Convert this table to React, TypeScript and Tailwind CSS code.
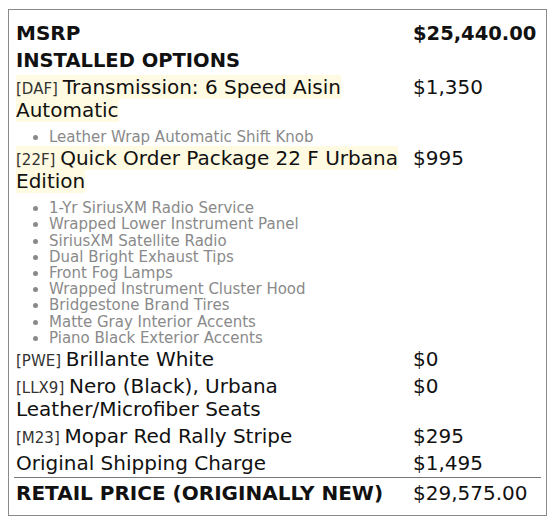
import React from 'react';

interface OptionRow {
  code?: string;
  name: string;
  price: string;
  highlight?: boolean;
  features?: string[];
}

const options: OptionRow[] = [
  {
    code: 'DAF',
    name: 'Transmission: 6 Speed Aisin Automatic',
    price: '$1,350',
    highlight: true,
    features: ['Leather Wrap Automatic Shift Knob'],
  },
  {
    code: '22F',
    name: 'Quick Order Package 22 F Urbana Edition',
    price: '$995',
    highlight: true,
    features: [
      '1-Yr SiriusXM Radio Service',
      'Wrapped Lower Instrument Panel',
      'SiriusXM Satellite Radio',
      'Dual Bright Exhaust Tips',
      'Front Fog Lamps',
      'Wrapped Instrument Cluster Hood',
      'Bridgestone Brand Tires',
      'Matte Gray Interior Accents',
      'Piano Black Exterior Accents',
    ],
  },
  { code: 'PWE', name: 'Brillante White', price: '$0' },
  { code: 'LLX9', name: 'Nero (Black), Urbana Leather/Microfiber Seats', price: '$0' },
  { code: 'M23', name: 'Mopar Red Rally Stripe', price: '$295' },
  { name: 'Original Shipping Charge', price: '$1,495' },
];

function Row({ left, right, className = 'py-[2px]' }: { left: React.ReactNode; right: React.ReactNode; className?: string }) {
  return (
    <div className={`grid grid-cols-[1fr_126px] gap-x-2 ${className}`}>
      <div>{left}</div>
      <div>{right}</div>
    </div>
  );
}

export default function App() {
  return (
    <div className="bg-white min-h-[528px] pl-[8px] pr-[8px] pt-[9px] font-['DejaVu_Sans',sans-serif] text-[#111] text-[20px] leading-[23px]">
      <div className="border border-[#8a8a8a] px-[7px] pt-[10px] pb-[10px]">
        <Row left={<span className="font-bold">MSRP</span>} right={<span className="font-bold text-[19.5px]">$25,440.00</span>} />
        <Row left={<span className="font-bold text-[19.5px]">INSTALLED OPTIONS</span>} right={null} />

        {options.map((o) => (
          <Row
            key={o.name}
            left={
              <>
                <span className={o.highlight ? 'bg-[#fffbe2]' : ''}>
                  {o.code && <span className="text-[15px] leading-[15px] text-[#333]">[{o.code}] </span>}
                  {o.name}
                </span>
                {o.features && (
                  <ul className="list-disc pl-[33px] pt-[7px] -mb-[2px] text-[15px] leading-[16.2px] text-[#8a8a8a]">
                    {o.features.map((f) => (
                      <li key={f}>{f}</li>
                    ))}
                  </ul>
                )}
              </>
            }
            right={o.price}
          />
        ))}

        <div className="-mx-[2px] mt-[0px] border-t border-[#777]" />
        <Row className="pt-[4px]" left={<span className="font-bold">RETAIL PRICE (ORIGINALLY NEW)</span>} right="$29,575.00" />
      </div>
    </div>
  );
}
